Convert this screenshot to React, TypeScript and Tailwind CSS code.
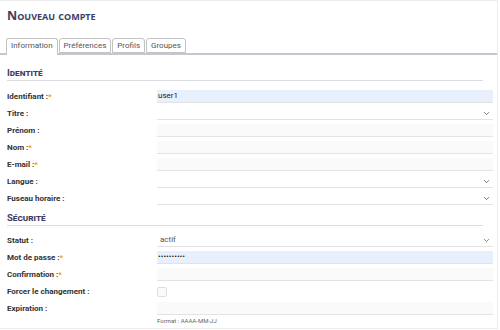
import React from "react";
import { ChevronDown } from "lucide-react";

type Row = {
  label: string;
  required?: boolean;
  kind: "text" | "select" | "check";
  value?: string;
  filled?: boolean;
};

const identite: Row[] = [
  { label: "Identifiant :", required: true, kind: "text", value: "user1", filled: true },
  { label: "Titre :", kind: "select" },
  { label: "Prénom :", kind: "text" },
  { label: "Nom :", required: true, kind: "text" },
  { label: "E-mail :", required: true, kind: "text" },
  { label: "Langue :", kind: "select" },
  { label: "Fuseau horaire :", kind: "select" },
];

const securite: Row[] = [
  { label: "Statut :", kind: "select", value: "actif" },
  { label: "Mot de passe :", required: true, kind: "text", value: "••••••••••", filled: true },
  { label: "Confirmation :", required: true, kind: "text" },
  { label: "Forcer le changement :", kind: "check" },
  { label: "Expiration :", kind: "text" },
];

const tabs = ["Information", "Préférences", "Profils", "Groupes"];

const Field = ({ row }: { row: Row }) => {
  if (row.kind === "check") {
    return (
      <div className="flex-1 flex items-center">
        <span className="w-[10px] h-[10px] rounded-[2px] border border-[#dedede] bg-[#fafafa]" />
      </div>
    );
  }
  if (row.kind === "select") {
    return (
      <div className="flex-1 h-[13px] flex items-center justify-between bg-white border-b border-[#e3e3e3] pl-[3px] pr-[2px] text-[8px] text-[#555]">
        <span>{row.value}</span>
        <ChevronDown size={9} strokeWidth={2.2} className="text-[#666]" />
      </div>
    );
  }
  return (
    <div
      className={`flex-1 h-[13px] flex items-center border-b border-[#e3e3e3] px-[1px] text-[8px] text-[#222] ${
        row.filled ? "bg-[#e8f0fe]" : "bg-[#fafafa]"
      }`}
    >
      {row.value}
    </div>
  );
};

const FormRow = ({ row }: { row: Row }) => (
  <div className="flex items-center h-[17px]">
    <div className="w-[150px] shrink-0 text-[8px] font-bold text-[#333]">
      {row.label}
      {row.required && <span className="text-[#f39c12]">*</span>}
    </div>
    <Field row={row} />
  </div>
);

const Section = ({ title }: { title: string }) => (
  <div className="mr-[10px] border-b border-[#dcdce3] pb-[1px] text-[9.5px] font-bold text-[#3b3b63] [font-variant:small-caps] leading-[12px]">
    {title}
  </div>
);

export default function App() {
  return (
    <div className="w-[500px] h-[330px] bg-white font-['Roboto',sans-serif] overflow-hidden">
      <div className="h-[329px] border-t border-r border-b border-[#ececec] mr-[2px]">
        <div className="pl-[7px] pt-[6px] text-[12.5px] font-bold text-[#3d3d66] [font-variant:small-caps] leading-[17px] font-['Open_Sans',sans-serif]">
          Nouveau compte
        </div>
        <div className="mt-[14px] flex items-end gap-[1px] pl-[6px] border-b-2 border-[#c6c6d0] h-[17px]">
          {tabs.map((t, i) => (
            <div
              key={t}
              className={`px-[4px] flex items-center text-[8px] text-[#555] border border-[#c3c3c3] rounded-t-[3px] bg-white ${
                i === 0 ? "-mb-[2px] h-[17px] border-b-0 pb-[2px]" : "h-[15px]"
              }`}
            >
              {t}
            </div>
          ))}
        </div>
        <div className="pl-[7px] pr-[4px]">
          <div className="mt-[12px]">
            <Section title="Identité" />
          </div>
          <div className="mt-[7px]">
            {identite.map((r) => (
              <FormRow key={r.label} row={r} />
            ))}
          </div>
          <div className="mt-[5px]">
            <Section title="Sécurité" />
          </div>
          <div className="mt-[6px]">
            {securite.map((r) => (
              <FormRow key={r.label} row={r} />
            ))}
          </div>
          <div className="pl-[150px] text-[6px] text-[#666] leading-[8px]">
            Format : AAAA-MM-JJ
          </div>
        </div>
      </div>
    </div>
  );
}
